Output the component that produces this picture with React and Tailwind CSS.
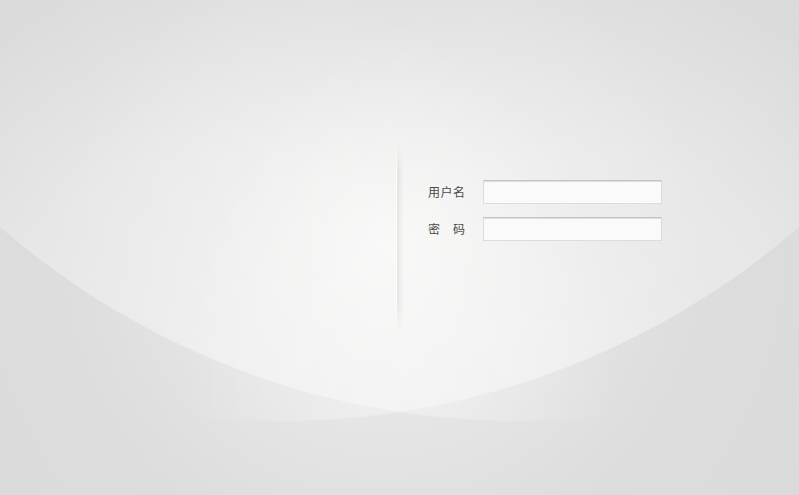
import { useState } from 'react';

function BackdropArcs() {
  return (
    <svg className="absolute inset-0 w-full h-full pointer-events-none" viewBox="0 0 799 495" preserveAspectRatio="none">
      <defs>
        <radialGradient id="glowLeft" gradientUnits="userSpaceOnUse" cx="220" cy="370" r="400">
          <stop offset="0" stopColor="#ffffff" stopOpacity="0.42" />
          <stop offset="0.55" stopColor="#ffffff" stopOpacity="0.3" />
          <stop offset="0.85" stopColor="#ffffff" stopOpacity="0.1" />
          <stop offset="1" stopColor="#ffffff" stopOpacity="0" />
        </radialGradient>
        <radialGradient id="glowRight" gradientUnits="userSpaceOnUse" cx="579" cy="370" r="400">
          <stop offset="0" stopColor="#ffffff" stopOpacity="0.42" />
          <stop offset="0.55" stopColor="#ffffff" stopOpacity="0.3" />
          <stop offset="0.85" stopColor="#ffffff" stopOpacity="0.1" />
          <stop offset="1" stopColor="#ffffff" stopOpacity="0" />
        </radialGradient>
      </defs>
      <circle cx="519" cy="-370" r="791" fill="url(#glowLeft)" />
      <circle cx="280" cy="-370" r="791" fill="url(#glowRight)" />
    </svg>
  );
}

function Field({ label, type = 'text' }) {
  const [value, setValue] = useState('');
  return (
    <label className="flex items-center">
      <span className="w-[37px] text-[12px] tracking-[0.5px] text-[#4a4a4a] leading-none whitespace-pre">{label}</span>
      <input
        type={type}
        value={value}
        onChange={(e) => setValue(e.target.value)}
        className="ml-[18px] w-[179px] h-[24px] bg-[#fafafa] border border-[#dcdcdc] border-t-[#c4c4c4] shadow-[inset_0_1px_0_#dedede] px-1 text-[12px] text-[#333] outline-none"
      />
    </label>
  );
}

export default function App() {
  return (
    <main
      className="relative w-full h-[495px] overflow-hidden bg-[radial-gradient(circle_at_48%_49%,#f3f3f1_0px,#ededec_70px,#e4e4e4_200px,#dddddd_320px,#dadada_520px)]"
      style={{ fontFamily: '"Noto Sans CJK SC", "Noto Sans", sans-serif' }}
    >
      <BackdropArcs />

      <div className="relative flex pt-[145px]">
        <div className="w-[396px] shrink-0" />

        {/* divider with soft shadow */}
        <div className="relative h-[186px] w-[1px] bg-[linear-gradient(to_bottom,transparent,#ffffff_15%,#ffffff_85%,transparent)]">
          <div className="absolute left-[1px] top-0 h-full w-[7px] bg-[linear-gradient(to_right,rgba(0,0,0,0.07),transparent)] [mask-image:linear-gradient(to_bottom,transparent,black_15%,black_85%,transparent)]" />
        </div>

        <form className="ml-[31px] pt-[35px] flex flex-col gap-[13px]" onSubmit={(e) => e.preventDefault()}>
          <Field label="用户名" />
          <Field label={'密\u3000码'} type="password" />
        </form>
      </div>
    </main>
  );
}
